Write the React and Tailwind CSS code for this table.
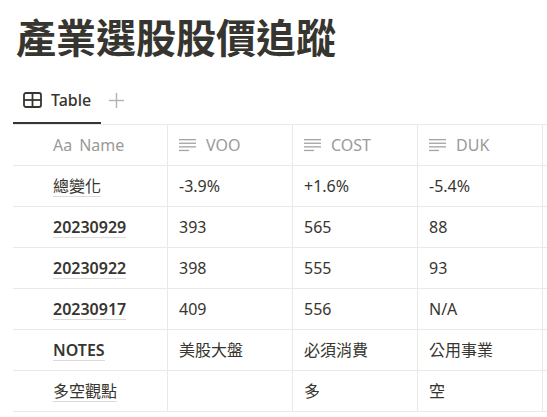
import React from "react";

const FONT = { fontFamily: '"Noto Sans", "Noto Sans CJK TC", sans-serif' };

function TextIcon() {
  return (
    <svg width="17" height="14" viewBox="0 0 17 14" className="shrink-0">
      <rect x="0" y="1" width="17" height="1.3" fill="#a5a4a1" />
      <rect x="0" y="4.6" width="17" height="1.3" fill="#a5a4a1" />
      <rect x="0" y="8.2" width="17" height="1.3" fill="#a5a4a1" />
      <rect x="0" y="11.8" width="10" height="1.3" fill="#a5a4a1" />
    </svg>
  );
}

function TableIcon() {
  return (
    <svg width="19" height="16" viewBox="0 0 19 16" className="shrink-0">
      <rect x="1" y="1" width="17" height="14" rx="2" fill="none" stroke="#37352f" strokeWidth="1.8" />
      <line x1="1" y1="8" x2="18" y2="8" stroke="#37352f" strokeWidth="1.8" />
      <line x1="9.5" y1="1" x2="9.5" y2="15" stroke="#37352f" strokeWidth="1.8" />
    </svg>
  );
}

function PlusIcon() {
  return (
    <svg width="15" height="15" viewBox="0 0 15 15" className="shrink-0">
      <line x1="7.5" y1="0" x2="7.5" y2="15" stroke="#b4b3b0" strokeWidth="1.4" />
      <line x1="0" y1="7.5" x2="15" y2="7.5" stroke="#b4b3b0" strokeWidth="1.4" />
    </svg>
  );
}

const rows = [
  { name: "總變化", bold: false, v: ["-3.9%", "+1.6%", "-5.4%"] },
  { name: "20230929", bold: true, v: ["393", "565", "88"] },
  { name: "20230922", bold: true, v: ["398", "555", "93"] },
  { name: "20230917", bold: true, v: ["409", "556", "N/A"] },
  { name: "NOTES", bold: true, v: ["美股大盤", "必須消費", "公用事業"] },
  { name: "多空觀點", bold: false, v: ["", "多", "空"] },
];

export default function App() {
  return (
    <div className="w-[547px] h-[417px] bg-white overflow-hidden text-[#37352f]" style={FONT}>
      <div className="pl-[16px] pt-[14px]">
        <h1 className="text-[40px] leading-[48px] font-bold">產業選股股價追蹤</h1>
      </div>
      <div className="mt-[16px] pl-[13px] flex items-center h-[46px]">
        <div className="h-[46px] flex items-center gap-[9px] pl-[10px] pr-[10px] border-b-2 border-[#37352f]">
          <TableIcon />
          <span className="text-[16px] font-medium leading-none">Table</span>
        </div>
        <span className="ml-[8px] -mt-[2px]">
          <PlusIcon />
        </span>
      </div>
      <div className="pl-[13px]">
        <div className="flex h-[42px] border-t border-b border-[#e9e9e7] text-[16px] text-[#9b9a97]">
          <div className="w-[155px] border-r border-[#e9e9e7] flex items-center pl-[40px] gap-[7px]">
            <span className="text-[16px]">Aa</span>
            <span>Name</span>
          </div>
          {["VOO", "COST", "DUK"].map((h) => (
            <div key={h} className="w-[125px] border-r border-[#e9e9e7] flex items-center pl-[11px] gap-[10px]">
              <TextIcon />
              <span>{h}</span>
            </div>
          ))}
        </div>
        {rows.map((r) => (
          <div key={r.name} className="flex h-[41px] border-b border-[#e9e9e7] text-[16px]">
            <div className="w-[155px] border-r border-[#e9e9e7] flex items-center pl-[40px]">
              <span
                className={
                  "leading-[20px] border-b border-[rgba(55,53,47,0.18)] " +
                  (r.bold ? "font-semibold" : "")
                }
              >
                {r.name}
              </span>
            </div>
            {r.v.map((v, i) => (
              <div key={i} className="w-[125px] border-r border-[#e9e9e7] flex items-center pl-[11px]">
                <span>{v}</span>
              </div>
            ))}
          </div>
        ))}
      </div>
    </div>
  );
}
